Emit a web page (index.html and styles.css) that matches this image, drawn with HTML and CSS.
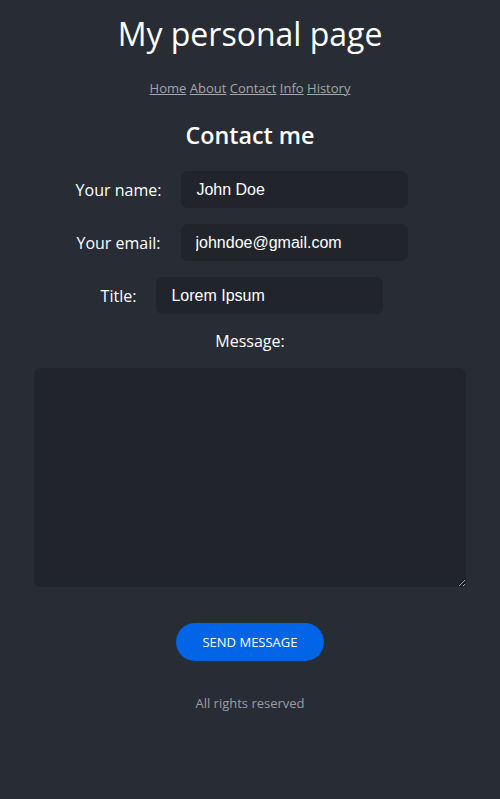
FILE: index.html
```html
<!DOCTYPE html>
<html lang="en">
<head>
<meta charset="utf-8">
<title>My personal page</title>
<link rel="stylesheet" href="styles.css">
</head>
<body>
<header class="header">
  <h1 class="title">My personal page</h1>
  <nav class="nav">
    <a href="#">Home</a> <a href="#">About</a> <a href="#">Contact</a> <a href="#">Info</a> <a href="#">History</a>
  </nav>
</header>
<main class="main">
  <h2 class="subtitle">Contact me</h2>
  <form class="form">
    <div class="row">
      <label class="label" for="name">Your name:</label>
      <input class="input" id="name" type="text" value="John Doe">
    </div>
    <div class="row">
      <label class="label" for="email">Your email:</label>
      <input class="input" id="email" type="text" value="johndoe@gmail.com">
    </div>
    <div class="row">
      <label class="label" for="title">Title:</label>
      <input class="input" id="title" type="text" value="Lorem Ipsum">
    </div>
    <label class="label msg-label" for="msg">Message:</label>
    <textarea class="textarea" id="msg"></textarea>
    <button class="button" type="button">SEND MESSAGE</button>
  </form>
</main>
<footer class="footer">All rights reserved</footer>
</body>
</html>
```
FILE: styles.css
```css
html, body {
  margin: 0;
  padding: 0;
  background: #282c34;
  color: #ffffff;
  font-family: "Open Sans", sans-serif;
}
body {
  min-height: 799px;
}
.header {
  text-align: center;
  padding-top: 12px;
}
.title {
  margin: 0;
  font-size: 32px;
  font-weight: 400;
  line-height: 44px;
}
.nav {
  margin-top: 23px;
  font-size: 13px;
  line-height: 18px;
}
.nav a {
  color: #a3a6ad;
}
.main {
  text-align: center;
}
.subtitle {
  margin: 22px 0 0;
  font-size: 23.3px;
  font-weight: 600;
  line-height: 32px;
}
.form {
  display: flex;
  flex-direction: column;
  align-items: center;
  margin-top: 20px;
}
.row {
  display: flex;
  align-items: center;
  gap: 20px;
  padding-right: 16px;
  margin-bottom: 16px;
}
.label {
  font-size: 16px;
  line-height: 22px;
}
.input {
  width: 227px;
  height: 37px;
  box-sizing: border-box;
  border: none;
  border-radius: 7px;
  background: #21242b;
  color: #ffffff;
  font-family: "Liberation Sans", Arial, sans-serif;
  font-size: 16px;
  padding: 0 15px;
  outline: none;
}
.msg-label {
  margin-top: 0;
}
.textarea {
  margin-top: 16px;
  width: 432px;
  height: 219px;
  box-sizing: border-box;
  border: none;
  border-radius: 7px;
  background: #21242b;
  color: #ffffff;
  outline: none;
}
.button {
  margin-top: 36px;
  width: 148px;
  height: 38px;
  border: none;
  border-radius: 19px;
  background: #0264e6;
  color: #ffffff;
  font-family: "Open Sans", sans-serif;
  font-size: 13px;
}
.footer {
  margin-top: 33px;
  text-align: center;
  font-size: 13px;
  color: #9a9da4;
}
```
